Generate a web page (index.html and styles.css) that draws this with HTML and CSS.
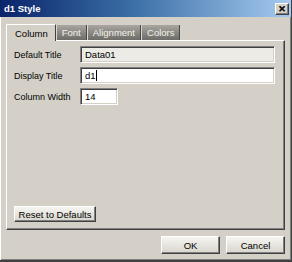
FILE: index.html
```html
<!DOCTYPE html>
<html lang="en">
<head>
    <meta charset="UTF-8">
    <title>d1 Style</title>
    <link rel="stylesheet" href="styles.css">
</head>
<body>
    <div class="window">
        <div class="titlebar">
            <span class="title">d1 Style</span>
            <button class="close" type="button">&#x2715;</button>
        </div>

        <div class="content">
            <!-- Tabs -->
            <div class="tabs">
                <div class="tab active">Column</div>
                <div class="tab">Font</div>
                <div class="tab">Alignment</div>
                <div class="tab">Colors</div>
            </div>

            <div class="panel">
                <div class="fields">
                    <label for="defaultTitle">Default Title</label>
                    <input type="text" id="defaultTitle" class="readonly" value="Data01" readonly />

                    <label for="displayTitle">Display Title</label>
                    <div class="field">
                        <input type="text" id="displayTitle" value="d1" />
                        <span class="caret"></span>
                    </div>

                    <label for="colWidth">Column Width</label>
                    <input type="text" id="colWidth" class="short" value="14" />
                </div>

                <div class="panel-footer">
                    <button class="btn reset" type="button">Reset to Defaults</button>
                </div>
            </div>

            <div class="actions">
                <button class="btn" type="button">OK</button>
                <button class="btn" type="button">Cancel</button>
            </div>
        </div>
    </div>
</body>
</html>
```

FILE: styles.css
```css
body {
    margin: 0;
    padding: 0;
    font-family: 'Liberation Sans', Arial, sans-serif;
    font-size: 9px;
    color: #000;
    background: #d4d0c8;
}
.window {
    width: 292px;
    height: 262px;
    box-sizing: border-box;
    background: #d4d0c8;
    border-right: 1px solid #404040;
    border-bottom: 2px solid #404040;
    box-shadow: inset 1px 0 #ffffff, inset -1px -1px #808080;
    display: flex;
    flex-direction: column;
}
.titlebar {
    height: 17px;
    display: flex;
    align-items: center;
    justify-content: space-between;
    padding: 0 2px 0 4px;
    background: linear-gradient(to right, #0a246a, #3a6ea5 45%, #a6caf0);
}
.title {
    color: #fff;
    font-weight: bold;
    font-size: 9.5px;
}
.close {
    width: 14px;
    height: 12px;
    padding: 0;
    margin: 0;
    font-family: 'DejaVu Sans', sans-serif;
    font-size: 9px;
    font-weight: bold;
    line-height: 10px;
    color: #000;
    background: #d4d0c8;
    border: 1px solid;
    border-color: #fff #404040 #404040 #fff;
    box-shadow: inset -1px -1px #808080;
    -webkit-text-stroke: 0.6px #000;
}
.content {
    flex: 1;
    display: flex;
    flex-direction: column;
    padding: 6px 6px 0 6px;
}
.tabs {
    display: flex;
    align-items: flex-end;
    height: 17px;
}
.tab {
    height: 15px;
    line-height: 15px;
    padding: 0 5px;
    font-size: 9.5px;
    color: #f2f2ee;
    background: linear-gradient(#a8a69f, #6e6c66);
    border-left: 1px solid #d8d6d0;
    border-right: 1px solid #4a4844;
}
.tab.active {
    height: 17px;
    line-height: 17px;
    padding: 0 7px 0 8px;
    color: #000;
    background: #d4d0c8;
    border-top: 1px solid #fff;
    border-left: 1px solid #fff;
    border-right: 1px solid #404040;
    box-sizing: border-box;
    position: relative;
    top: 1px;
}
.panel {
    height: 190px;
    box-sizing: border-box;
    border: 1px solid;
    border-color: #fff #404040 #404040 #fff;
    box-shadow: inset -1px -1px #808080;
    display: flex;
    flex-direction: column;
    padding: 5px 8px 7px 7px;
}
.fields {
    display: grid;
    grid-template-columns: 66px 1fr;
    row-gap: 4px;
    align-items: center;
    padding-right: 1px;
}
label {
    white-space: nowrap;
}
.field {
    position: relative;
}
.caret {
    position: absolute;
    left: 16px;
    top: 3px;
    width: 1px;
    height: 11px;
    background: #000;
}
input {
    display: block;
    height: 17px;
    box-sizing: border-box;
    margin: 0;
    padding: 0 4px;
    font-family: inherit;
    font-size: 9.5px;
    background: #fff;
    border: 1px solid;
    border-color: #808080 #fff #fff #808080;
    box-shadow: inset 1px 1px #404040, inset -1px -1px #d4d0c8;
    outline: none;
    width: 100%;
}
input.readonly {
    background: #ecebe6;
}
input.short {
    width: 38px;
}
.panel-footer {
    margin-top: auto;
}
.btn {
    height: 16px;
    box-sizing: border-box;
    padding: 0;
    margin: 0;
    font-family: inherit;
    font-size: 9.5px;
    white-space: nowrap;
    color: #000;
    background: linear-gradient(#f6f5f2, #d8d5cd);
    border: 1px solid;
    border-color: #fff #404040 #404040 #fff;
    box-shadow: inset -1px -1px #808080;
}
.reset {
    width: 82px;
}
.actions {
    display: flex;
    justify-content: flex-end;
    gap: 6px;
    margin-top: 6px;
}
.actions .btn {
    width: 59px;
    height: 18px;
}
```
